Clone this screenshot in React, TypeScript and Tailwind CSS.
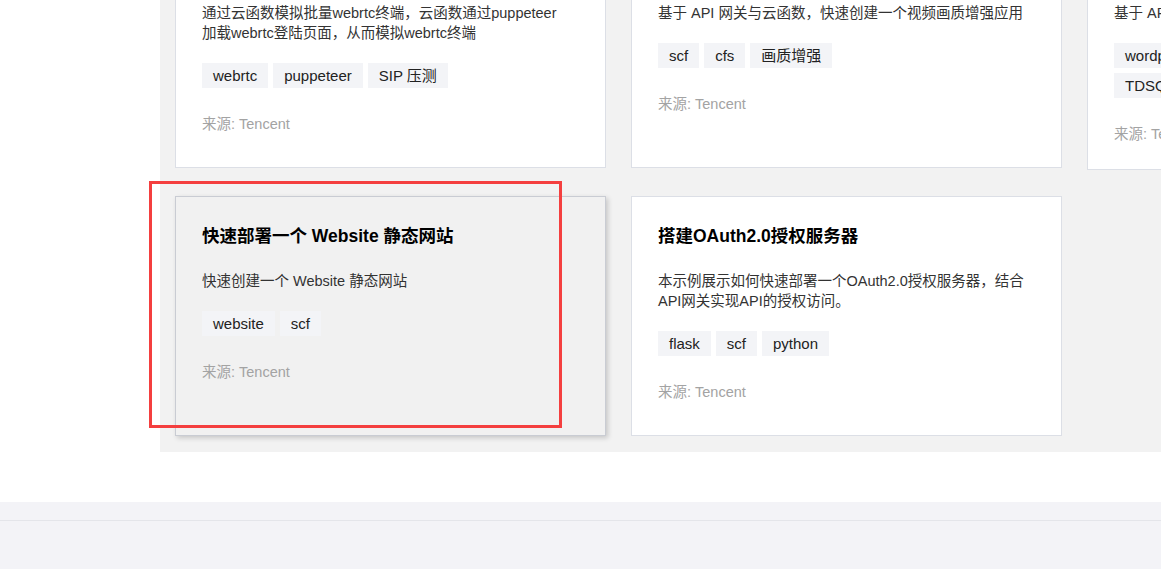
const cards = [
  {
    title: "webrtc 终端模拟压测",
    desc: "通过云函数模拟批量webrtc终端，云函数通过puppeteer加载webrtc登陆页面，从而模拟webrtc终端",
    tags: ["webrtc", "puppeteer", "SIP 压测"],
  },
  {
    title: "视频画质增强应用",
    desc: "基于 API 网关与云函数，快速创建一个视频画质增强应用",
    tags: ["scf", "cfs", "画质增强"],
  },
  {
    title: "快速部署一个 Wordpress 网站",
    desc: "基于 API 网关与云函数，快速部署 Wordpress",
    tags: ["wordpress", "serverless framework", "scf", "TDSQL-C"],
  },
  {
    title: "快速部署一个 Website 静态网站",
    desc: "快速创建一个 Website 静态网站",
    tags: ["website", "scf"],
    active: true,
  },
  {
    title: "搭建OAuth2.0授权服务器",
    desc: "本示例展示如何快速部署一个OAuth2.0授权服务器，结合API网关实现API的授权访问。",
    tags: ["flask", "scf", "python"],
  },
];

type Card = (typeof cards)[number];

function TemplateCard({ card }: { card: Card }) {
  return (
    <div
      className={
        "flex min-h-[240px] w-[431px] flex-col border pt-[27px] pr-[35px] pb-[24px] pl-[26px] " +
        (card.active
          ? "border-[#c9ccd3] bg-[#f1f1f1] shadow-[2px_2px_5px_rgba(0,0,0,0.18)]"
          : "border-[#dcdfe6] bg-white")
      }
    >
      {/* Title */}
      <h3 className="text-[17.5px] leading-[24px] font-bold text-black">{card.title}</h3>

      <p className="mt-[23px] text-[14.5px] leading-[20px] text-[#333]">{card.desc}</p>

      {/* Tags */}
      <div className="mt-[20px] flex flex-wrap gap-[5px]">
        {card.tags.map((t) => (
          <span
            key={t}
            className="bg-[#f3f4f7] px-[11px] text-[15px] leading-[25px] whitespace-nowrap text-[#222]"
          >
            {t}
          </span>
        ))}
      </div>

      <div className="mt-[25px] text-[14.5px] leading-[22px] text-[#a3a3a3]">来源: Tencent</div>
    </div>
  );
}

export default function App() {
  return (
    <div
      className="relative h-[569px] overflow-hidden bg-white"
      style={{ fontFamily: '"Liberation Sans", "Noto Sans CJK SC", sans-serif' }}
    >
      {/* Template list */}
      <div className="mt-[-87px] flex">
        <div className="w-[160px] shrink-0" />
        <div className="min-w-0 flex-1 overflow-hidden bg-[#f2f2f2] pt-[15px] pb-[16px] pl-[15px]">
          <div className="grid grid-cols-[repeat(3,431px)] items-start gap-x-[25px] gap-y-[26px]">
            {cards.map((c) => (
              <TemplateCard key={c.title} card={c} />
            ))}
          </div>
        </div>
      </div>

      {/* Footer */}
      <div className="mt-[50px] h-[200px] bg-[#f3f3f7]">
        <div className="h-[19px] border-b border-[#e4e5ea]" />
      </div>

      {/* Highlight box */}
      <div className="absolute top-[181px] left-[149px] h-[247px] w-[413px] border-[3px] border-[#f43f3f]" />
    </div>
  );
}
